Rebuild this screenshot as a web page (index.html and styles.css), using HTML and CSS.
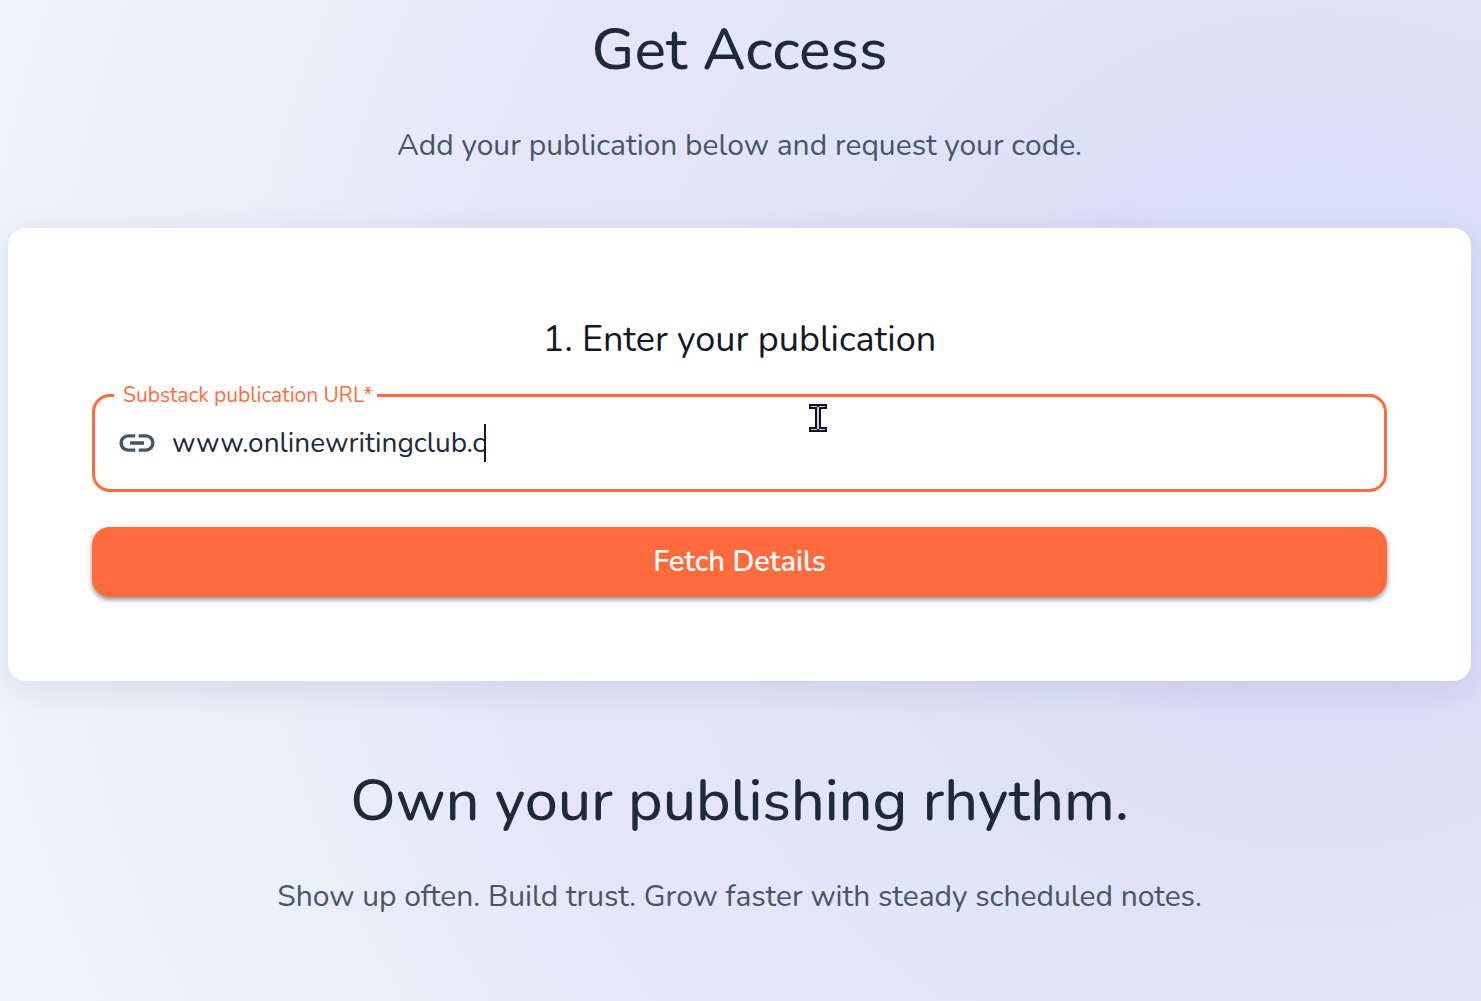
FILE: index.html
```html
<!DOCTYPE html>
<html lang="en">
<head>
	<meta charset="UTF-8">
	<meta name="viewport" content="width=device-width, initial-scale=1">
	<title>Get Access</title>
	<link rel="stylesheet" href="styles.css">
</head>
<body>
	<main class="page">
		<header class="intro">
			<h1>Get Access</h1>
			<p>Add your publication below and request your code.</p>
		</header>

		<form class="card">
			<h2>1. Enter your publication</h2>
			<fieldset class="field">
				<legend><label for="url">Substack publication URL*</label></legend>
				<div class="field-row">
					<svg class="link-icon" viewBox="0 0 24 24" aria-hidden="true">
						<path d="M3.9 12c0-1.71 1.39-3.1 3.1-3.1h4V7H7c-2.76 0-5 2.24-5 5s2.24 5 5 5h4v-1.9H7c-1.71 0-3.1-1.39-3.1-3.1zM8 13h8v-2H8v2zm9-6h-4v1.9h4c1.71 0 3.1 1.39 3.1 3.1s-1.39 3.1-3.1 3.1h-4V17h4c2.76 0 5-2.24 5-5s-2.24-5-5-5z"/>
					</svg>
					<input type="text" id="url" value="www.onlinewritingclub.c" autocomplete="off" spellcheck="false">
					<span class="caret"></span>
				</div>
				<svg class="pointer" viewBox="0 0 18 28" aria-hidden="true">
					<path d="M1 1h7l1 1 1-1h7v3h-6v20h6v3h-7l-1-1-1 1H1v-3h6V4H1z"/>
				</svg>
			</fieldset>
			<button type="button" class="fetch">Fetch Details</button>
		</form>

		<section class="outro">
			<h1>Own your publishing rhythm.</h1>
			<p>Show up often. Build trust. Grow faster with steady scheduled notes.</p>
		</section>
	</main>
</body>
</html>
```
FILE: styles.css
```css
*{
	box-sizing: border-box;
}
body{
	margin: 0;
	min-height: 100vh;
	font-family: Nunito, Lato, sans-serif;
	color: #1e293b;
	background: radial-gradient(circle at 89% 43%,
		#dadff9 0,
		#dadff9 255px,
		#dddcf8 295px,
		#dce1f6 345px,
		#dce1f6 390px,
		#e0e1f6 440px,
		#dfe4f7 530px,
		#e3e6f8 640px,
		#e5e7f8 850px,
		#e8ecf8 1000px,
		#ebf0f9 1180px,
		#eff3fa 1360px);
}
h1, h2, p{
	margin: 0;
	font-weight: normal;
	text-align: center;
}
h1{
	font-size: 59px;
	font-weight: 500;
	line-height: 72px;
}
h2{
	font-size: 36px;
	line-height: 56px;
	color: #111827;
}
p{
	margin-top: 36px;
	font-size: 30px;
	line-height: 48px;
	color: #475569;
}
.page{
	padding: 14px 10px 0 8px;
}
.intro{
	padding-bottom: 58px;
}
.card{
	padding: 84px;
	border-radius: 18px;
	background-color: #fff;
	box-shadow: 0 8px 36px rgba(30, 41, 90, 0.1);
}
.field{
	position: relative;
	min-width: 0;
	margin: 15px 0 35px;
	padding: 0 24px 26px;
	border: 3px solid #ff6b3d;
	border-radius: 18px;
}
.field legend{
	margin-left: -5px;
	padding: 0 4px 0 9px;
	font-size: 21px;
	line-height: 24px;
	color: #ff6b3d;
}
.field-row{
	display: flex;
	align-items: center;
	height: 56px;
	padding-top: 16px;
}
.link-icon{
	flex: none;
	width: 42px;
	height: 42px;
	margin-left: -3px;
	fill: #475569;
}
.field input{
	field-sizing: content;
	max-width: 90%;
	margin-left: 14px;
	padding: 0;
	border: 0;
	outline: 0;
	background: none;
	font: 28px/38px Nunito, Lato, sans-serif;
	color: #1e293b;
}
.caret{
	width: 2px;
	height: 38px;
	margin-left: -1px;
	background-color: #111827;
}
.pointer{
	position: absolute;
	left: 714px;
	top: -3px;
	width: 18px;
	height: 28px;
	fill: #cdd0e4;
	stroke: #111122;
	stroke-width: 2;
}
.fetch{
	display: block;
	width: 100%;
	padding: 14px;
	border: 0;
	border-radius: 18px;
	background-color: #ff6b3d;
	box-shadow: 0 3px 4px rgba(0, 0, 0, 0.35), 0 1px 8px rgba(0, 0, 0, 0.12);
	font: 600 29px/42px Nunito, Lato, sans-serif;
	color: #fff;
	cursor: pointer;
}
.outro{
	padding: 84px 0 72px;
}
```
